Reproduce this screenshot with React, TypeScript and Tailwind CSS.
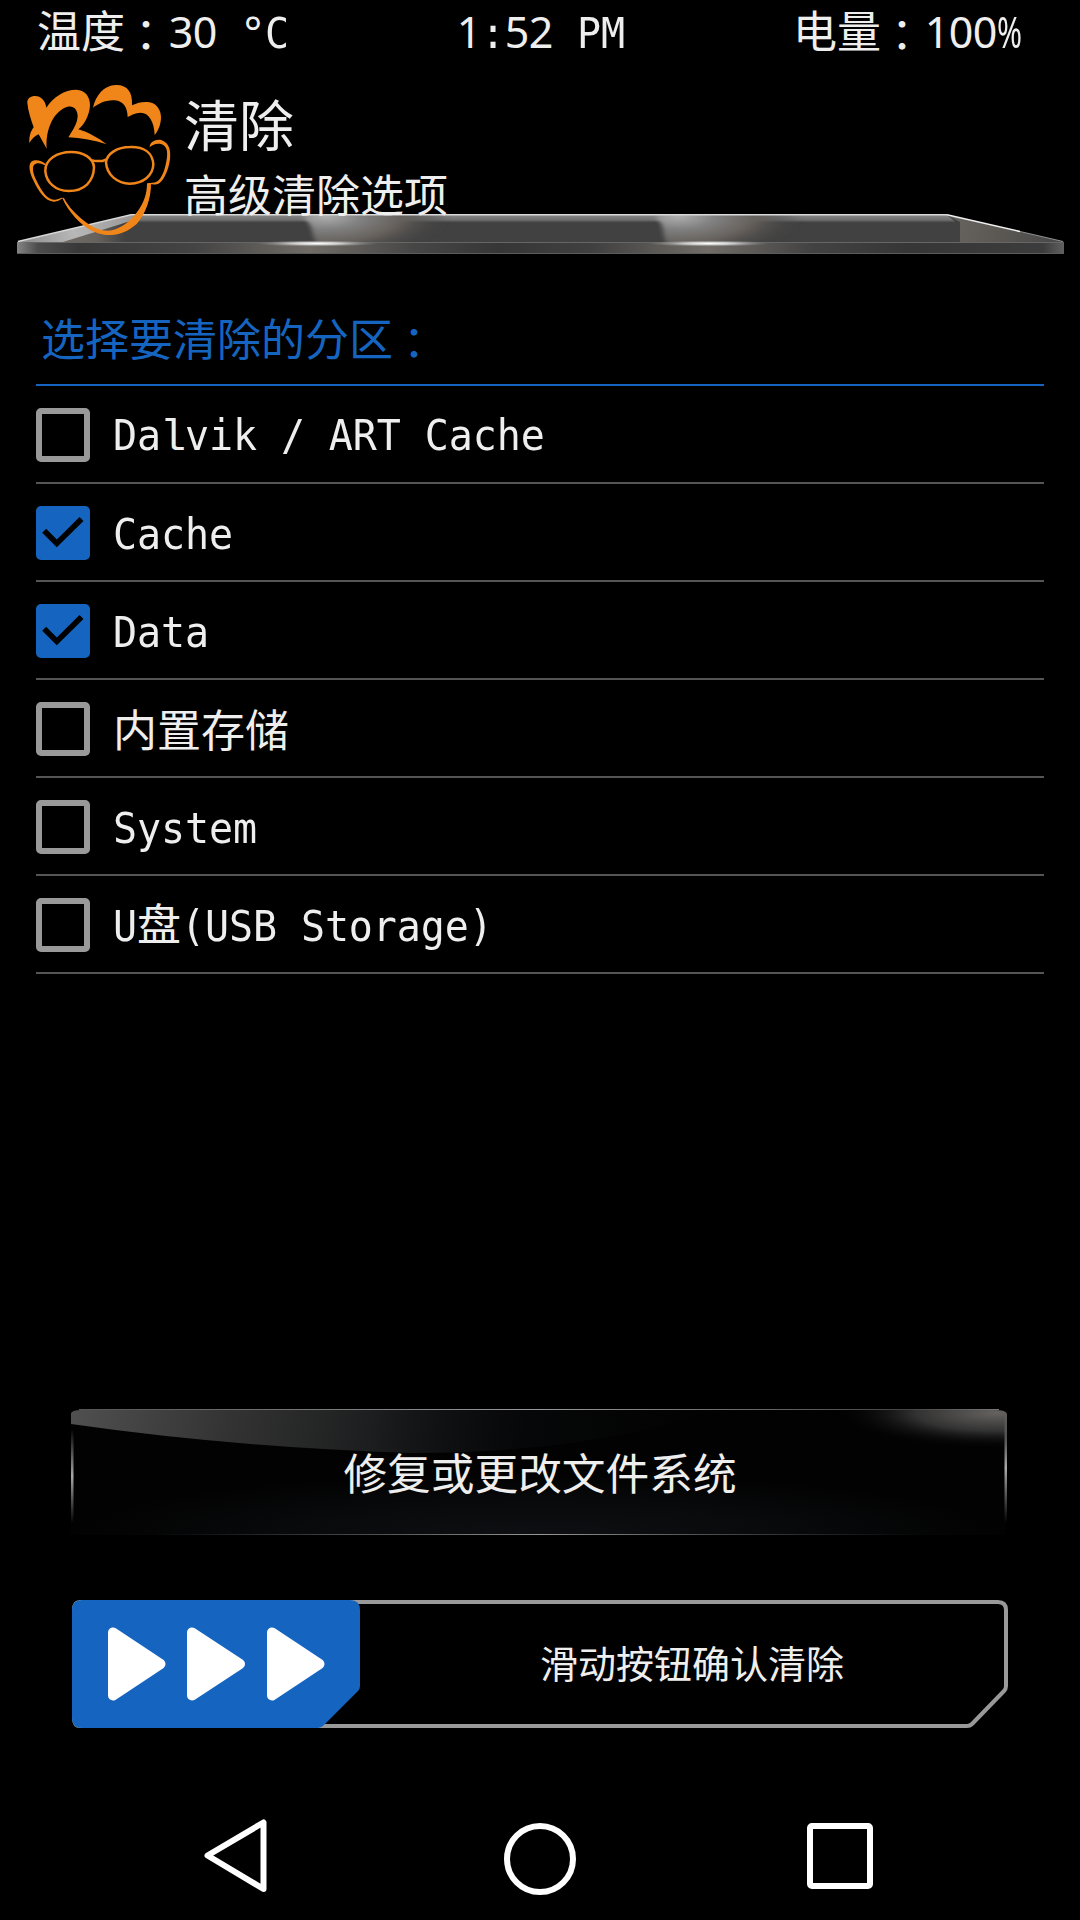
import React from "react";

const rows = [
  { label: "Dalvik / ART Cache", checked: false },
  { label: "Cache", checked: true },
  { label: "Data", checked: true },
  { label: "内置存储", checked: false },
  { label: "System", checked: false },
  { label: "U盘(USB Storage)", checked: false },
];

function Label({ children }: { children: string }) {
  const runs = children.match(/：|[\u4e00-\u9fff]+|[0-9°%]+|l|[^\u4e00-\u9fff：0-9°%l]+/g) ?? [];
  return (
    <span className="flex items-baseline font-['Noto_Sans_CJK_SC',sans-serif] text-[44px] leading-[48px] whitespace-pre before:content-['\200b']">
      {runs.map((run, i) => {
        if (run === "：")
          return <span key={i} className="relative top-[4px] right-[1px] font-['Noto_Sans_CJK_TC',sans-serif]">{run}</span>;
        if (/[\u4e00-\u9fff]/.test(run)) return <span key={i}>{run}</span>;
        if (/[0-9°%]/.test(run))
          return (
            <span key={i} className="flex font-['Noto_Sans',sans-serif] text-[43px]">
              {[...run].map((c, j) => (
                <span key={j} className={c === "%" ? "w-6 origin-left scale-x-[0.7]" : "flex w-6 justify-center"}>{c}</span>
              ))}
            </span>
          );
        if (run === "l")
          return <span key={i} className="flex w-6 justify-center font-['Liberation_Mono',monospace]">{run}</span>;
        return (
          <span key={i} className="origin-[0_79%] scale-y-[1.06] font-['DejaVu_Sans_Mono',monospace] text-[40px] tracking-[-0.1px]">
            {run}
          </span>
        );
      })}
    </span>
  );
}

function Checkbox({ checked }: { checked: boolean }) {
  if (!checked) return <span className="mt-[2px] size-[54px] rounded-[5px] border-6 border-[#999999]" />;
  return (
    <span className="mt-[2px] size-[54px] rounded-[5px] bg-[#1565c0]">
      <svg viewBox="0 0 54 54" className="size-full" fill="none" stroke="#000" strokeWidth="5.6">
        <path d="M8.2 24.7 L20.8 37.4 L45.5 12.9" />
      </svg>
    </span>
  );
}

function Shelf() {
  return (
    <svg viewBox="0 0 1080 44" className="block h-[44px] w-[1080px]">
      <defs>
        <linearGradient id="lip" x1="0" x2="0" y1="0" y2="9" gradientUnits="userSpaceOnUse">
          <stop offset="0" stopColor="#8c8c8c" />
          <stop offset="0.65" stopColor="#707070" />
          <stop offset="0.85" stopColor="#505050" />
          <stop offset="1" stopColor="#414141" stopOpacity="0" />
        </linearGradient>
        <radialGradient id="beamA" cx="0" cy="0" r="1" gradientUnits="userSpaceOnUse" gradientTransform="translate(325 2) scale(125 44)">
          <stop offset="0" stopColor="#b0b0b0" />
          <stop offset="0.3" stopColor="#808080" />
          <stop offset="0.6" stopColor="#66615c" />
          <stop offset="1" stopColor="#414141" stopOpacity="0" />
        </radialGradient>
        <radialGradient id="beamB" cx="0" cy="0" r="1" gradientUnits="userSpaceOnUse" gradientTransform="translate(678 2) scale(125 44)">
          <stop offset="0" stopColor="#b0b0b0" />
          <stop offset="0.3" stopColor="#808080" />
          <stop offset="0.6" stopColor="#66615c" />
          <stop offset="1" stopColor="#414141" stopOpacity="0" />
        </radialGradient>
        <filter id="soft" x="-5%" y="0" width="110%" height="100%">
          <feGaussianBlur stdDeviation="2.500 0.500" />
        </filter>
        <linearGradient id="wingL" x1="18" x2="130" y1="30" y2="5" gradientUnits="userSpaceOnUse">
          <stop offset="0" stopColor="#8a8a8a" />
          <stop offset="0.5" stopColor="#b8b8b8" />
          <stop offset="1" stopColor="#9a9a9a" />
        </linearGradient>
        <linearGradient id="innerL" x1="30" x2="125" y1="0" y2="0" gradientUnits="userSpaceOnUse">
          <stop offset="0" stopColor="#77736e" />
          <stop offset="0.7" stopColor="#67625c" />
          <stop offset="1" stopColor="#414141" />
        </linearGradient>
        <linearGradient id="wingR" x1="958" x2="1050" y1="4" y2="29" gradientUnits="userSpaceOnUse">
          <stop offset="0" stopColor="#66635f" />
          <stop offset="0.5" stopColor="#5a5753" />
          <stop offset="1" stopColor="#4a4a4a" />
        </linearGradient>
        <linearGradient id="front" x1="17" x2="1064" y1="0" y2="0" gradientUnits="userSpaceOnUse">
          <stop offset="0" stopColor="#858585" />
          <stop offset="0.02" stopColor="#4c4c4c" />
          <stop offset="0.06" stopColor="#383838" />
          <stop offset="0.17" stopColor="#444444" />
          <stop offset="0.28" stopColor="#716c66" />
          <stop offset="0.38" stopColor="#464646" />
          <stop offset="0.46" stopColor="#363636" />
          <stop offset="0.55" stopColor="#404040" />
          <stop offset="0.66" stopColor="#716c66" />
          <stop offset="0.76" stopColor="#424242" />
          <stop offset="0.85" stopColor="#363636" />
          <stop offset="0.98" stopColor="#3c3c3c" />
          <stop offset="1" stopColor="#606060" />
        </linearGradient>
        <radialGradient id="glow">
          <stop offset="0" stopColor="#fff" />
          <stop offset="0.4" stopColor="#ddd" stopOpacity="0.85" />
          <stop offset="1" stopColor="#888" stopOpacity="0" />
        </radialGradient>
      </defs>
      <path d="M17 28 L131 1 H947 L1064 28 V29 H17Z" fill="#414141" />
      <path d="M131 1 H947 L958 10 H122Z" fill="url(#lip)" />
      <path d="M305 1 H470 V28 H316 C312 22 313 11 305 5Z" fill="url(#beamA)" filter="url(#soft)" />
      <path d="M657 1 H830 V28 H666 C662 20 665 11 657 5Z" fill="url(#beamB)" filter="url(#soft)" />
      <path d="M50 29 L122 10 L126 12 V29Z" fill="url(#innerL)" />
      <path d="M17 28 L131 1 L136 5 L118 11 L24 40 H17Z" fill="url(#wingL)" />
      <path d="M947 1 L1064 28 V29 H960 V8Z" fill="url(#wingR)" />
      <path d="M17 28 H1064 V40 H17Z" fill="url(#front)" />
      <path d="M30 28.500 H1062" stroke="#666" strokeWidth="1" />
      <path d="M17 39.500 H1064" stroke="#5c5c5c" strokeWidth="1" />
      <path d="M18 27.500 L131 0.800 H947" fill="none" stroke="#d8d8d8" strokeWidth="1.6" />
      <path d="M947 0.800 L1020 17.500" fill="none" stroke="#f0f0f0" strokeWidth="1.6" />
      <path d="M1020 17.500 L1063 27.500" fill="none" stroke="#909090" strokeWidth="1.2" />
      <ellipse cx="317" cy="29.500" rx="62" ry="3.200" fill="url(#glow)" />
      <ellipse cx="709" cy="29.500" rx="62" ry="3.200" fill="url(#glow)" />
    </svg>
  );
}

function Logo() {
  return (
    <svg viewBox="0 0 510 510" className="size-[170px]" fill="#f08519">
      <path d="M37 84 C35 62 68 56 82 72 C89 79 92 87 94 98 C116 65 148 44 184 44 C212 45 225 66 225 91 C224 120 207 151 190 163 C219 171 250 189 275 208 C238 196 198 189 160 187 C172 167 188 145 188 122 C187 103 176 91 158 95 C119 106 91 158 95 221 L71 178 C59 182 50 193 43 204 C42 183 47 169 56 157 C48 134 39 108 37 84Z" />
      <path d="M234 98 C242 61 267 31 302 30 C338 29 353 52 351 91 C369 82 387 79 404 82 C433 88 443 118 436 145 C433 159 426 172 419 180 C418 140 401 113 377 113 C361 113 348 121 338 126 C337 98 327 79 299 76 C273 74 250 86 234 98Z" />
      <path d="M404 217 C404 200 425 191 440 196 C462 204 468 225 465 253 C461 284 448 313 434 324 C425 330 414 328 405 328 C408 369 391 417 365 445 C340 466 312 481 279 479 C242 478 208 457 181 428 C163 408 151 391 143 370 C137 373 134 378 119 380 C91 382 70 348 55 316 C45 294 38 271 49 260 C63 251 80 258 92 267 L89 271 C77 263 64 262 57 270 C50 280 56 300 64 316 C79 348 99 378 121 374 C132 373 135 367 145 368 C161 398 185 424 213 445 C240 465 272 474 297 466 C323 459 349 438 366 416 C390 386 399 357 399 325 C407 323 417 324 425 320 C442 312 452 277 456 247 C459 222 451 208 434 206 C419 205 410 211 404 217Z" />
      <g fill="none" stroke="#f08519" strokeWidth="7.5">
        <path d="M91 289 C89 254 126 231 169 231 C205 231 235 249 237 277 C236 318 209 348 161 348 C120 348 94 321 91 289Z" />
        <path d="M273 262 C276 236 307 216 345 216 C387 215 413 233 415 268 C414 301 386 325 345 326 C307 326 275 299 273 262Z" />
        <path d="M231 255 Q238 259 248 258 H263 L274 253" />
      </g>
      <path d="M396 325 H408 C409 369 391 419 365 447 C340 468 312 482 279 480 C252 478 228 468 205 449 C196 442 158 405 143 370 H147 C161 396 185 422 215 443 C240 463 272 472 297 464 C323 457 347 436 364 414 C388 384 396 355 396 325Z" />
    </svg>
  );
}

function RepairButton() {
  return (
    <button className="relative right-[1px] flex h-[128px] w-[936px] items-center justify-center">
      <svg viewBox="0 0 936 128" className="absolute inset-0 size-full">
        <defs>
          <linearGradient id="shine" x1="0" y1="0" x2="440" y2="90" gradientUnits="userSpaceOnUse">
            <stop offset="0" stopColor="#505050" />
            <stop offset="0.35" stopColor="#333333" />
            <stop offset="0.7" stopColor="#1a1b1c" />
            <stop offset="1" stopColor="#0a0b0d" />
          </linearGradient>
          <linearGradient id="shineFade" x1="300" x2="640" y1="0" y2="0" gradientUnits="userSpaceOnUse">
            <stop offset="0" stopColor="#020202" stopOpacity="0" />
            <stop offset="1" stopColor="#020202" />
          </linearGradient>
          <radialGradient id="corner" cx="0" cy="0" r="1" gradientUnits="userSpaceOnUse" gradientTransform="translate(925 4) scale(160 36)">
            <stop offset="0" stopColor="#65625f" />
            <stop offset="0.5" stopColor="#323232" />
            <stop offset="1" stopColor="#000" stopOpacity="0" />
          </radialGradient>
          <radialGradient id="floor" cx="0.5" cy="1" r="0.5">
            <stop offset="0" stopColor="#0d0f12" />
            <stop offset="0.5" stopColor="#090a0c" />
            <stop offset="1" stopColor="#020202" />
          </radialGradient>
          <linearGradient id="top" x1="0" x2="1">
            <stop offset="0" stopColor="#555" />
            <stop offset="0.5" stopColor="#999" />
            <stop offset="0.9" stopColor="#444" />
            <stop offset="1" stopColor="#777" />
          </linearGradient>
          <linearGradient id="bottom" x1="0" x2="1">
            <stop offset="0.05" stopColor="#666" stopOpacity="0" />
            <stop offset="0.5" stopColor="#999" />
            <stop offset="0.95" stopColor="#666" stopOpacity="0" />
          </linearGradient>
          <linearGradient id="side" x1="0" x2="0" y1="0" y2="1">
            <stop offset="0" stopColor="#999" stopOpacity="0" />
            <stop offset="0.5" stopColor="#aaa" />
            <stop offset="1" stopColor="#999" stopOpacity="0" />
          </linearGradient>
        </defs>
        <rect x="0" y="1" width="935" height="125" fill="url(#floor)" />
        <path d="M0 15 V4 Q2 1 10 1 H640 Q520 44 340 44 Q160 38 0 15Z" fill="url(#shine)" />
        <path d="M300 1 H640 Q520 45 340 45 L300 44Z" fill="url(#shineFade)" />
        <path d="M740 1 H925 Q935 1 936 5 V42 H740Z" fill="url(#corner)" />
        <rect x="8" y="0" width="920" height="1" fill="url(#top)" />
        <rect x="40" y="125" width="856" height="1" fill="url(#bottom)" />
        <rect x="0" y="20" width="2.500" height="94" fill="url(#side)" />
        <rect x="933.500" y="4" width="2.500" height="110" fill="url(#side)" />
      </svg>
      <span className="relative bottom-[2px] left-[1px] font-['Noto_Sans_CJK_SC',sans-serif] text-[43.700px] leading-[44px]">修复或更改文件系统</span>
    </button>
  );
}

function Slider() {
  return (
    <div className="relative flex h-[128px] w-[936px] items-center">
      <svg viewBox="0 0 936 128" className="absolute inset-0 size-full">
        <path d="M8 2 H926 Q934 2 934 10 V86 Q934 89 932 91 L900 124 Q898 126 895 126 H8 Q2 126 2 118 V10 Q2 2 8 2Z" fill="none" stroke="#999" strokeWidth="4" />
        <path d="M10 0 H278 Q288 0 288 10 V86 Q288 89 286 91 L252 125 Q249 128 246 128 H10 Q0 128 0 118 V10 Q0 0 10 0Z" fill="#1565c0" />
        <g fill="#fff" stroke="#fff" strokeWidth="10" strokeLinejoin="round">
          <path d="M41 32.500 V95.500 L88.500 64Z" />
          <path d="M120 32.500 V95.500 L168 64Z" />
          <path d="M200 32.500 V95.500 L247.500 64Z" />
        </g>
      </svg>
      <span className="relative mb-[4px] ml-[468px] font-['Noto_Sans_CJK_SC',sans-serif] text-[38px] leading-[38px]">滑动按钮确认清除</span>
    </div>
  );
}

export default function App() {
  return (
    <main className="flex h-[1920px] w-[1080px] flex-col bg-black text-[#eeeeee]">
      <header className="flex h-[75px] justify-between pt-[5px] pr-[59px] pl-[37px]">
        <Label>温度：30 °C</Label>
        <Label>1:52 PM</Label>
        <Label>电量：100%</Label>
      </header>
      <section className="relative h-[183px]">
        <div className="absolute top-[139px] left-0">
          <Shelf />
        </div>
        <div className="relative flex pl-[15px] font-['Noto_Sans_CJK_SC',sans-serif]">
          <Logo />
          <div className="-ml-px flex flex-col pt-[20px]">
            <h1 className="text-[55px] leading-[55px]">清除</h1>
            <p className="mt-[21px] text-[44px] leading-[44px]">高级清除选项</p>
          </div>
        </div>
      </section>
      <section className="mx-9">
        <h2 className="flex h-[128px] items-center border-b-2 border-[#1565c0] pt-[32px] pl-[5px] text-[#1565c0]">
          <Label>选择要清除的分区：</Label>
        </h2>
        <ul>
          {rows.map((row) => (
            <li key={row.label} className="flex h-[98px] items-center gap-[23px] border-b-2 border-[#555555]">
              <Checkbox checked={row.checked} />
              <Label>{row.label}</Label>
            </li>
          ))}
        </ul>
      </section>
      <div className="mt-auto flex flex-col items-center gap-[63px] pb-[72px]">
        <RepairButton />
        <Slider />
      </div>
      <nav className="flex h-[120px] shrink-0 items-start pt-[19px] pl-[204px]">
        <svg viewBox="0 0 63 74" className="h-[74px] w-[63px]" fill="none" stroke="#fff" strokeWidth="6" strokeLinejoin="round">
          <path d="M59.500 3.500 V70 L3.500 36.500Z" />
        </svg>
        <span className="mt-1 ml-[237px] size-[72px] rounded-full border-6 border-white" />
        <span className="mt-1 ml-[231px] size-[66px] rounded-[5px] border-6 border-white" />
      </nav>
    </main>
  );
}
